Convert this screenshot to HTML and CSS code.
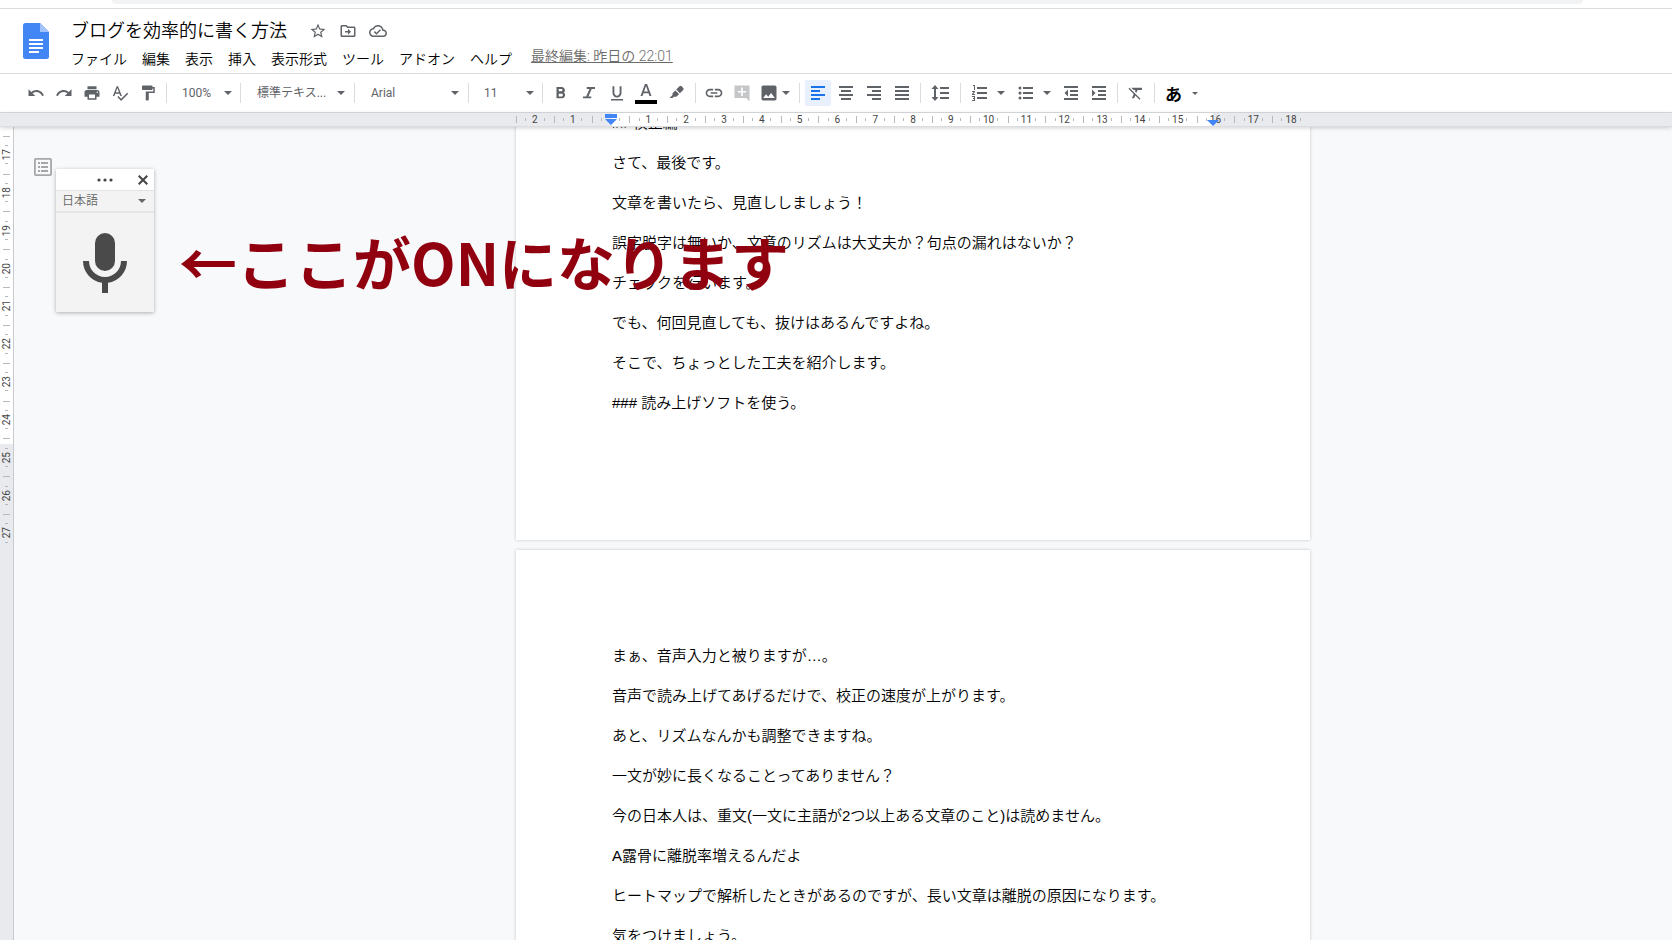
FILE: index.html
```html
<!DOCTYPE html>
<html lang="ja">
<head>
<meta charset="utf-8">
<meta name="viewport" content="width=device-width, initial-scale=1">
<title>ブログを効率的に書く方法</title>
<link rel="stylesheet" href="styles.css">
</head>
<body>
<div class="browser-edge"><div class="address-bar"></div></div>

<header class="header">
  <a class="logo" href="#" aria-label="ドキュメント ホーム">
    <svg width="26" height="36" viewBox="0 0 26 36"><path fill="#4285f4" d="M2.500 0H17l9 9v24.500a2.500 2.500 0 0 1-2.500 2.500h-21A2.500 2.500 0 0 1 0 33.500v-31A2.500 2.500 0 0 1 2.500 0z"/><path fill="#a1c2fa" d="M17 0l9 9h-9z"/><path fill="#fff" d="M6 16h14v2H6zM6 20h14v2H6zM6 24h14v2H6zM6 28h10v2H6z"/></svg>
  </a>
  <div class="header-main">
    <div class="title-row">
      <input class="title" type="text" value="ブログを効率的に書く方法" aria-label="ドキュメント名">
      <button class="title-btn" aria-label="スター"><svg width="18" height="18" viewBox="0 0 24 24"><path d="M22 9.240l-7.190-.62L12 2 9.190 8.630 2 9.240l5.460 4.730L5.820 21 12 17.270 18.180 21l-1.630-7.030L22 9.240zM12 15.400l-3.760 2.270 1-4.280-3.320-2.880 4.380-.38L12 6.100l1.710 4.040 4.380.38-3.320 2.880 1 4.280L12 15.400z"/></svg></button>
      <button class="title-btn" aria-label="移動"><svg width="18" height="18" viewBox="0 0 24 24"><path d="M20 6h-8l-2-2H4c-1.100 0-2 .9-2 2v12c0 1.100.9 2 2 2h16c1.100 0 2-.9 2-2V8c0-1.100-.9-2-2-2zm0 12H4V6h5.170l2 2H20v10zm-8-1l4-4-4-4v3H8v2h4z"/></svg></button>
      <button class="title-btn" aria-label="保存状態"><svg width="18" height="18" viewBox="0 0 24 24"><path d="M19.350 10.040C18.670 6.590 15.640 4 12 4 9.110 4 6.600 5.640 5.350 8.040 2.340 8.360 0 10.910 0 14c0 3.310 2.690 6 6 6h13c2.760 0 5-2.240 5-5 0-2.640-2.050-4.780-4.650-4.960zM19 18H6c-2.210 0-4-1.790-4-4 0-2.050 1.530-3.760 3.560-3.970l1.070-.11.5-.95C8.080 7.140 9.940 6 12 6c2.620 0 4.880 1.860 5.390 4.430l.3 1.500 1.530.11c1.560.1 2.780 1.410 2.780 2.960 0 1.650-1.350 3-3 3zm-9-3.820l-2.090-2.090L6.500 13.500 10 17l6.010-6.010-1.410-1.410z"/></svg></button>
    </div>
    <div class="menu-row">
      <nav class="menus" aria-label="メニュー">
        <button class="menu">ファイル</button><button class="menu">編集</button><button class="menu">表示</button><button class="menu">挿入</button><button class="menu">表示形式</button><button class="menu">ツール</button><button class="menu">アドオン</button><button class="menu">ヘルプ</button>
      </nav>
      <a class="last-edit" href="#">最終編集: 昨日の 22:01</a>
    </div>
  </div>
</header>

<div class="toolbar" role="toolbar" aria-label="ツールバー">
  <button class="tool" aria-label="元に戻す"><svg width="18" height="18" viewBox="0 0 24 24"><path d="M12.500 8c-2.650 0-5.050.99-6.900 2.600L2 7v9h9l-3.620-3.620c1.390-1.160 3.160-1.880 5.120-1.880 3.540 0 6.550 2.310 7.600 5.500l2.370-.78C21.080 11.030 17.150 8 12.500 8z"/></svg></button>
  <button class="tool" aria-label="やり直し"><svg width="18" height="18" viewBox="0 0 24 24"><path d="M18.400 10.600C16.550 8.990 14.150 8 11.500 8c-4.650 0-8.580 3.030-9.960 7.220L3.900 16c1.050-3.190 4.050-5.500 7.600-5.500 1.950 0 3.730.72 5.120 1.880L13 16h9V7l-3.600 3.600z"/></svg></button>
  <button class="tool" aria-label="印刷"><svg width="18" height="18" viewBox="0 0 24 24"><path d="M19 8H5c-1.660 0-3 1.340-3 3v6h4v4h12v-4h4v-6c0-1.660-1.340-3-3-3zm-3 11H8v-5h8v5zm3-7c-.55 0-1-.45-1-1s.45-1 1-1 1 .45 1 1-.45 1-1 1zm-1-9H6v4h12V3z"/></svg></button>
  <button class="tool" aria-label="スペルチェック"><svg width="18" height="18" viewBox="0 0 24 24"><path d="M12.450 16h2.090L9.430 3H7.570L2.460 16h2.090l1.120-3h5.640l1.140 3zm-6.020-5L8.500 5.480 10.570 11H6.430zm15.160.59l-8.090 8.090L9.830 16l-1.410 1.410 5.090 5.090L23 13l-1.410-1.410z"/></svg></button>
  <button class="tool" aria-label="書式を貼り付け"><svg width="18" height="18" viewBox="0 0 24 24"><path d="M18 4V3c0-.55-.45-1-1-1H5c-.55 0-1 .45-1 1v4c0 .55.45 1 1 1h12c.55 0 1-.45 1-1V6h1v4H9v11c0 .55.45 1 1 1h2c.55 0 1-.45 1-1v-9h8V4h-3z"/></svg></button>
  <span class="sep"></span>
  <span class="picker picker-narrow"><select aria-label="ズーム"><option>100%</option></select><i class="caret"></i></span>
  <span class="sep"></span>
  <span class="picker picker-wide"><select aria-label="スタイル"><option>標準テキス...</option></select><i class="caret"></i></span>
  <span class="sep"></span>
  <span class="picker picker-wide"><select aria-label="フォント"><option>Arial</option></select><i class="caret"></i></span>
  <span class="sep"></span>
  <span class="picker picker-narrow"><select aria-label="フォントサイズ"><option>11</option></select><i class="caret"></i></span>
  <span class="sep"></span>
  <button class="tool" aria-label="太字"><svg width="18" height="18" viewBox="0 0 24 24"><path d="M15.600 11.290c.97-.67 1.650-1.770 1.650-2.790 0-2.500-1.940-4.500-4.250-4.500H6v15h7.540c2.090 0 3.960-1.950 3.960-4.340 0-1.520-.86-2.820-1.900-3.370zM9 6.500h3.500c.83 0 1.500.67 1.500 1.500s-.67 1.500-1.500 1.500H9v-3zm4 10H9V13h4c.83 0 1.500.67 1.500 1.750s-.67 1.750-1.500 1.750z"/></svg></button>
  <button class="tool" aria-label="斜体"><svg width="18" height="18" viewBox="0 0 24 24"><path d="M9 4v2.500h3.600L8.200 16.500H4V19h11v-2.500h-3.800l4.400-10H20V4z"/></svg></button>
  <button class="tool" aria-label="下線"><svg width="18" height="18" viewBox="0 0 24 24"><path d="M12 18c3.310 0 6-2.690 6-6V3h-2.500v9c0 1.930-1.570 3.500-3.500 3.500S8.500 13.930 8.500 12V3H6v9c0 3.310 2.690 6 6 6zM4 20v2h16v-2H4z"/></svg></button>
  <button class="tool tool-color" aria-label="テキストの色"><svg width="22" height="22" viewBox="0 0 22 22"><path d="M9.900 2L5.500 14h2l1-2.800h5l1 2.800h2L12.100 2zM9.100 9.500L11 4.100l1.900 5.400z"/><path fill="#000" d="M0 18h22v4H0z"/></svg></button>
  <button class="tool tool-color" aria-label="ハイライトの色"><svg width="18" height="18" viewBox="0 0 18 18"><path d="M12.500 2.300a1.500 1.500 0 0 1 2.100 0l1.600 1.600a1.500 1.500 0 0 1 0 2.100l-3.300 3.300-3.700-3.700zM8.400 6.400l3.700 3.700-2.700 2.700H6.700L5.600 14H2.500l3-3.100V9.200z"/></svg></button>
  <span class="sep"></span>
  <button class="tool" aria-label="リンクを挿入"><svg width="20" height="20" viewBox="0 0 24 24"><path d="M3.900 12c0-1.710 1.390-3.100 3.100-3.100h4V7H7c-2.760 0-5 2.240-5 5s2.240 5 5 5h4v-1.900H7c-1.710 0-3.100-1.390-3.100-3.100zM8 13h8v-2H8v2zm9-6h-4v1.900h4c1.710 0 3.100 1.390 3.100 3.100s-1.390 3.100-3.100 3.100h-4V17h4c2.760 0 5-2.240 5-5s-2.240-5-5-5z"/></svg></button>
  <button class="tool tool-off" aria-label="コメントを追加" disabled><svg width="20" height="20" viewBox="0 0 24 24"><path d="M21 3H3v15h14l4 4zm-4 8.500h-4v4h-2v-4H7v-2h4v-4h2v4h4z"/></svg></button>
  <button class="split split-image" aria-label="画像を挿入"><svg width="20" height="20" viewBox="0 0 24 24"><path d="M21 19V5c0-1.100-.9-2-2-2H5c-1.100 0-2 .9-2 2v14c0 1.100.9 2 2 2h14c1.100 0 2-.9 2-2zM8.500 13.500l2.500 3.010L14.500 12l4.500 6H5l3.500-4.500z"/></svg><i class="caret"></i></button>
  <span class="sep"></span>
  <button class="tool tool-on" aria-label="左揃え" aria-pressed="true"><svg width="18" height="18" viewBox="0 0 18 18"><path d="M2 2h14v2H2zM2 6h9v2H2zM2 10h14v2H2zM2 14h9v2H2z"/></svg></button>
  <button class="tool" aria-label="中央揃え"><svg width="18" height="18" viewBox="0 0 18 18"><path d="M2 2h14v2H2zM4 6h10v2H4zM2 10h14v2H2zM4 14h10v2H4z"/></svg></button>
  <button class="tool" aria-label="右揃え"><svg width="18" height="18" viewBox="0 0 18 18"><path d="M2 2h14v2H2zM7 6h9v2H7zM2 10h14v2H2zM7 14h9v2H7z"/></svg></button>
  <button class="tool" aria-label="両端揃え"><svg width="18" height="18" viewBox="0 0 18 18"><path d="M2 2h14v2H2zM2 6h14v2H2zM2 10h14v2H2zM2 14h14v2H2z"/></svg></button>
  <span class="sep"></span>
  <button class="tool tool-spacing" aria-label="行間隔"><svg width="20" height="18" viewBox="0 0 20 18"><path d="M4 1l3.500 4H5v8h2.500L4 17 .5 13H3V5H.5zM9 3h9v2H9zM9 8h9v2H9zM9 13h9v2H9z"/></svg></button>
  <span class="sep"></span>
  <button class="split" aria-label="番号付きリスト"><svg width="18" height="18" viewBox="0 0 18 18"><path d="M6 3h10v2H6zM6 8h10v2H6zM6 13h10v2H6zM2 1h2v5H3V2H2zM1 7h3v1L2.300 10H4v1H1v-1l1.700-2H1zM1 12h3v5H1v-1h2v-1H2v-1h1v-1H1z"/></svg><i class="caret"></i></button>
  <button class="split" aria-label="箇条書き"><svg width="18" height="18" viewBox="0 0 18 18"><path d="M6 3h10v2H6zM6 8h10v2H6zM6 13h10v2H6z"/><circle cx="3" cy="4" r="1.500"/><circle cx="3" cy="9" r="1.500"/><circle cx="3" cy="14" r="1.500"/></svg><i class="caret"></i></button>
  <button class="tool" aria-label="インデント減"><svg width="18" height="18" viewBox="0 0 18 18"><path d="M2 2h14v2H2zM8 6h8v2H8zM8 10h8v2H8zM2 14h14v2H2zM6 5.500v7L2.500 9z"/></svg></button>
  <button class="tool" aria-label="インデント増"><svg width="18" height="18" viewBox="0 0 18 18"><path d="M2 2h14v2H2zM8 6h8v2H8zM8 10h8v2H8zM2 14h14v2H2zM2 5.500v7L5.500 9z"/></svg></button>
  <span class="sep"></span>
  <button class="tool" aria-label="書式をクリア"><svg width="18" height="18" viewBox="0 0 24 24"><path d="M3.270 5L2 6.270l6.970 6.970L6.500 19h3l1.570-3.660L16.730 21 18 19.730 3.550 5.270 3.270 5zM6 5v.18L8.820 8h2.400l-.72 1.680 2.100 2.100L14.210 8H20V5H6z"/></svg></button>
  <span class="sep"></span>
  <button class="split split-ime" aria-label="入力ツール"><span>あ</span><i class="caret caret-small"></i></button>
</div>

<div class="ruler">
  <div class="ruler-scale">
    <div class="ruler-cell">2</div>
    <div class="ruler-cell">1</div>
    <div class="ruler-cell"><svg class="marker" width="12" height="11" viewBox="0 0 12 11"><path d="M0 0h12v4H0zM0 5h12l-6 6z"/></svg></div>
    <div class="ruler-cell">1</div>
    <div class="ruler-cell">2</div>
    <div class="ruler-cell">3</div>
    <div class="ruler-cell">4</div>
    <div class="ruler-cell">5</div>
    <div class="ruler-cell">6</div>
    <div class="ruler-cell">7</div>
    <div class="ruler-cell">8</div>
    <div class="ruler-cell">9</div>
    <div class="ruler-cell">10</div>
    <div class="ruler-cell">11</div>
    <div class="ruler-cell">12</div>
    <div class="ruler-cell">13</div>
    <div class="ruler-cell">14</div>
    <div class="ruler-cell">15</div>
    <div class="ruler-cell">16<svg class="marker marker-right" width="12" height="6" viewBox="0 0 12 6"><path d="M0 0h12L6 6z"/></svg></div>
    <div class="ruler-cell">17</div>
    <div class="ruler-cell">18</div>
  </div>
</div>

<main class="workspace">
  <div class="side-ruler">
    <div class="side-scale">
      <div class="side-cell"></div>
      <div class="side-cell"><span>17</span></div>
      <div class="side-cell"><span>18</span></div>
      <div class="side-cell"><span>19</span></div>
      <div class="side-cell"><span>20</span></div>
      <div class="side-cell"><span>21</span></div>
      <div class="side-cell"><span>22</span></div>
      <div class="side-cell"><span>23</span></div>
      <div class="side-cell"><span>24</span></div>
      <div class="side-cell"><span>25</span></div>
      <div class="side-cell"><span>26</span></div>
      <div class="side-cell"><span>27</span></div>
    </div>
  </div>
  <div class="side">
    <button class="outline-btn" aria-label="概要を表示"><svg width="18" height="18" viewBox="0 0 18 18"><path fill="none" stroke="#a5a8ab" stroke-width="1.800" d="M1.900.9h14.200a1 1 0 0 1 1 1v14.200a1 1 0 0 1-1 1H1.900a1 1 0 0 1-1-1V1.900a1 1 0 0 1 1-1z"/><path fill="#a5a8ab" d="M4 4h2v2H4zM7 4h7v2H7zM4 8h2v2H4zM7 8h7v2H7zM4 12h2v2H4zM7 12h7v2H7z"/></svg></button>
    <section class="voice" aria-label="音声入力">
      <div class="voice-bar">
        <button class="voice-more" aria-label="その他"><svg width="16" height="4" viewBox="0 0 16 4"><circle cx="2" cy="2" r="1.600"/><circle cx="8" cy="2" r="1.600"/><circle cx="14" cy="2" r="1.600"/></svg></button>
        <button class="voice-close" aria-label="閉じる"><svg width="10" height="10" viewBox="0 0 10 10"><path fill="none" stroke="#444" stroke-width="2" d="M.7.7l8.600 8.600M9.300.7L.7 9.300"/></svg></button>
      </div>
      <span class="picker voice-lang"><select aria-label="言語"><option>日本語</option></select><i class="caret"></i></span>
      <button class="mic" aria-label="音声入力を開始"><svg width="44" height="60" viewBox="0 0 44 60"><rect x="12" y="0" width="20" height="38" rx="10"/><path d="M0 28h6a16 16 0 0 0 32 0h6a22 22 0 0 1-19 21.700V60h-6V49.700A22 22 0 0 1 0 28z"/></svg></button>
    </section>
  </div>
  <div class="pages">
    <article class="page page-first">
      <p>## 校正編</p>
      <p>さて、最後です。</p>
      <p>文章を書いたら、見直ししましょう！</p>
      <p>誤字脱字は無いか、文章のリズムは大丈夫か？句点の漏れはないか？</p>
      <p>チェックを行います。</p>
      <p>でも、何回見直しても、抜けはあるんですよね。</p>
      <p>そこで、ちょっとした工夫を紹介します。</p>
      <p>### 読み上げソフトを使う。</p>
    </article>
    <article class="page page-second">
      <p>まぁ、音声入力と被りますが…。</p>
      <p>音声で読み上げてあげるだけで、校正の速度が上がります。</p>
      <p>あと、リズムなんかも調整できますね。</p>
      <p>一文が妙に長くなることってありません？</p>
      <p>今の日本人は、重文(一文に主語が2つ以上ある文章のこと)は読めません。</p>
      <p>A露骨に離脱率増えるんだよ</p>
      <p>ヒートマップで解析したときがあるのですが、長い文章は離脱の原因になります。</p>
      <p>気をつけましょう。</p>
    </article>
  </div>
  <p class="callout">←ここがONになります</p>
</main>
</body>
</html>
```
FILE: styles.css
```css
:root {
  --page-left: 516px;
  --page-width: 794px;
  --side-ruler: 14px;
  --ink: #5f6368;
  --line: #dadce0;
  --tick: #b5b8bc;
}

* { box-sizing: border-box; }

body {
  margin: 0;
  height: 100vh;
  display: flex;
  flex-direction: column;
  overflow: hidden;
  background: #fff;
  color: #000;
  font-family: Roboto, "Noto Sans CJK JP", sans-serif;
  font-weight: 350;
}

button, select, input {
  margin: 0;
  padding: 0;
  border: 0;
  background: none;
  color: inherit;
  font: inherit;
}

button { cursor: pointer; }
svg { display: block; fill: currentColor; }

.browser-edge {
  flex: none;
  height: 9px;
  padding: 0 89px 0 112px;
  border-bottom: 1px solid var(--line);
}

.address-bar {
  height: 4px;
  border-radius: 0 0 12px 12px;
  background: #f1f3f4;
}

.header {
  flex: none;
  display: flex;
  height: 65px;
  padding-left: 23px;
  border-bottom: 1px solid var(--line);
}

.logo { margin: 14px 15px 0 0; }
.header-main { flex: 1; padding-top: 8px; }
.title-row { display: flex; align-items: center; height: 28px; }

.title {
  width: 226px;
  height: 28px;
  margin: 0 6px 0 7px;
  padding-bottom: 4px;
  font-size: 18px;
}

.title-btn {
  width: 30px;
  height: 24px;
  display: grid;
  place-items: center;
  color: var(--ink);
}

.menu-row { display: flex; align-items: center; height: 28px; }
.menus { display: flex; gap: 1px; }

.menu {
  padding: 0 7px;
  font-size: 14px;
  line-height: 24px;
  white-space: nowrap;
}

.last-edit {
  margin: 0 0 6px 12px;
  color: #6b6b6b;
  font-size: 14px;
  line-height: 20px;
}

.toolbar {
  flex: none;
  display: flex;
  align-items: center;
  height: 39px;
  padding-left: 22px;
  border-bottom: 1px solid var(--line);
  color: var(--ink);
  font-weight: 400;
}

.tool {
  flex: none;
  display: grid;
  place-items: center;
  width: 26px;
  height: 26px;
  margin: 0 1px;
  border-radius: 2px;
}

.tool-color { width: 28px; }
.tool-spacing { width: 29px; }
.tool-off { color: #c4c6c8; }
.tool-on { background: #e8f0fe; color: #1a73e8; }

.sep {
  flex: none;
  width: 1px;
  height: 20px;
  margin: 0 4px;
  background: var(--line);
}

.caret {
  border: 4px solid transparent;
  border-top-color: currentColor;
  border-bottom: 0;
}

.caret-small { border-width: 3px 3px 0; }

.picker { display: grid; align-items: center; }
.picker > * { grid-area: 1 / 1; }

.picker select {
  appearance: none;
  width: 100%;
  height: 26px;
  padding-left: 12px;
  font-size: 12px;
}

.picker .caret { justify-self: end; margin-right: 4px; pointer-events: none; }
.picker-narrow { width: 65px; }
.picker-narrow select { padding-left: 11px; }
.picker-wide { width: 105px; }
.picker-wide .caret { margin-right: 5px; }

.split {
  flex: none;
  display: flex;
  align-items: center;
  gap: 8px;
  height: 26px;
  padding: 0 6px 0 6px;
}

.split-image { gap: 3px; padding: 0 5px 0 3px; }
.split-ime { gap: 10px; color: #000; font-size: 17px; font-weight: 700; }
.split-ime .caret { color: var(--ink); }

.ruler {
  flex: none;
  height: 14px;
  padding-left: var(--page-left);
  border-bottom: 1px solid var(--line);
  background: #e8eaed;
  box-shadow: 0 1px 4px #0000002e;
  position: relative;
  z-index: 2;
}

.ruler-scale {
  display: grid;
  grid-template-columns: repeat(21, 1fr);
  width: var(--page-width);
  height: 13px;
  /* Printable span: between the left and the right page margin. */
  background: linear-gradient(#fff, #fff) 96px 0 / 601px 100% no-repeat;
}

.ruler-cell {
  position: relative;
  display: grid;
  place-items: center;
  background:
    linear-gradient(var(--tick), var(--tick)) 0 50% / 1px 7px no-repeat,
    linear-gradient(var(--tick), var(--tick)) 25% 50% / 1px 3px no-repeat,
    linear-gradient(var(--tick), var(--tick)) 75% 50% / 1px 3px no-repeat;
  color: #444;
  font-size: 10px;
  font-weight: 400;
  line-height: 13px;
}

.marker { fill: #4285f4; }
.marker-right { position: absolute; left: 10px; bottom: 0; }

.workspace {
  flex: 1;
  min-height: 0;
  position: relative;
  display: flex;
  overflow: hidden;
  background: #f8f9fa;
}

.side-ruler {
  flex: none;
  width: var(--side-ruler);
  overflow: hidden;
  border-right: 1px solid #c8cacd;
  background: linear-gradient(#fff 317px, #e8eaed 317px);
}

.side-scale {
  display: grid;
  grid-template-rows: repeat(12, 1fr);
  height: 454px;
  margin-top: -29px;
}

.side-cell {
  display: grid;
  place-items: center;
  padding-left: 1px;
  background:
    linear-gradient(var(--tick), var(--tick)) 3px 0 / 7px 1px no-repeat,
    linear-gradient(var(--tick), var(--tick)) 5px 25% / 3px 1px no-repeat,
    linear-gradient(var(--tick), var(--tick)) 5px 75% / 3px 1px no-repeat;
  color: #444;
  font-size: 10px;
  font-weight: 400;
}

.side-cell span {
  writing-mode: vertical-rl;
  transform: rotate(180deg);
  line-height: 12px;
}

.side {
  flex: none;
  display: flex;
  align-items: flex-start;
  width: calc(var(--page-left) - var(--side-ruler));
  padding: 31px 0 0 20px;
}

.outline-btn { margin-right: 4px; }

.voice {
  width: 98px;
  margin-top: 11px;
  background: #f3f3f3;
  box-shadow: 0 1px 4px #0000004d;
}

.voice-bar {
  display: grid;
  grid-template-columns: 1fr auto 1fr;
  align-items: center;
  height: 21px;
  padding: 0 6px;
  background: #fff;
  color: #444;
}

.voice-more { grid-column: 2; }
.voice-close { justify-self: end; }

.voice-lang {
  border-top: 1px solid #e5e5e5;
  border-bottom: 2px solid #e5e5e5;
  color: #666;
}

.voice-lang select { height: 20px; padding-left: 6px; }
.voice-lang .caret { margin-right: 8px; }

.mic {
  width: 100%;
  height: 99px;
  display: grid;
  place-items: center;
  color: #4a4a4a;
}

.pages { flex: none; width: var(--page-width); }

.page {
  padding: 0 96px;
  background: #fff;
  box-shadow: 0 0 3px #00000038;
  font-family: "Liberation Sans", "Noto Sans CJK JP", sans-serif;
  font-size: 15px;
  line-height: 40px;
}

.page p { margin: 0; white-space: nowrap; }
.page-first { margin: -24px 0 10px; padding-bottom: 117px; }
.page-second { padding-top: 86px; }

/* Note pinned over the canvas, pointing at the microphone. */
.callout {
  position: absolute;
  top: 92px;
  left: 179px;
  margin: 0;
  color: #90000f;
  font-family: "Noto Sans CJK JP", sans-serif;
  font-size: 58px;
  font-weight: 700;
  line-height: 84px;
  white-space: nowrap;
}
```
